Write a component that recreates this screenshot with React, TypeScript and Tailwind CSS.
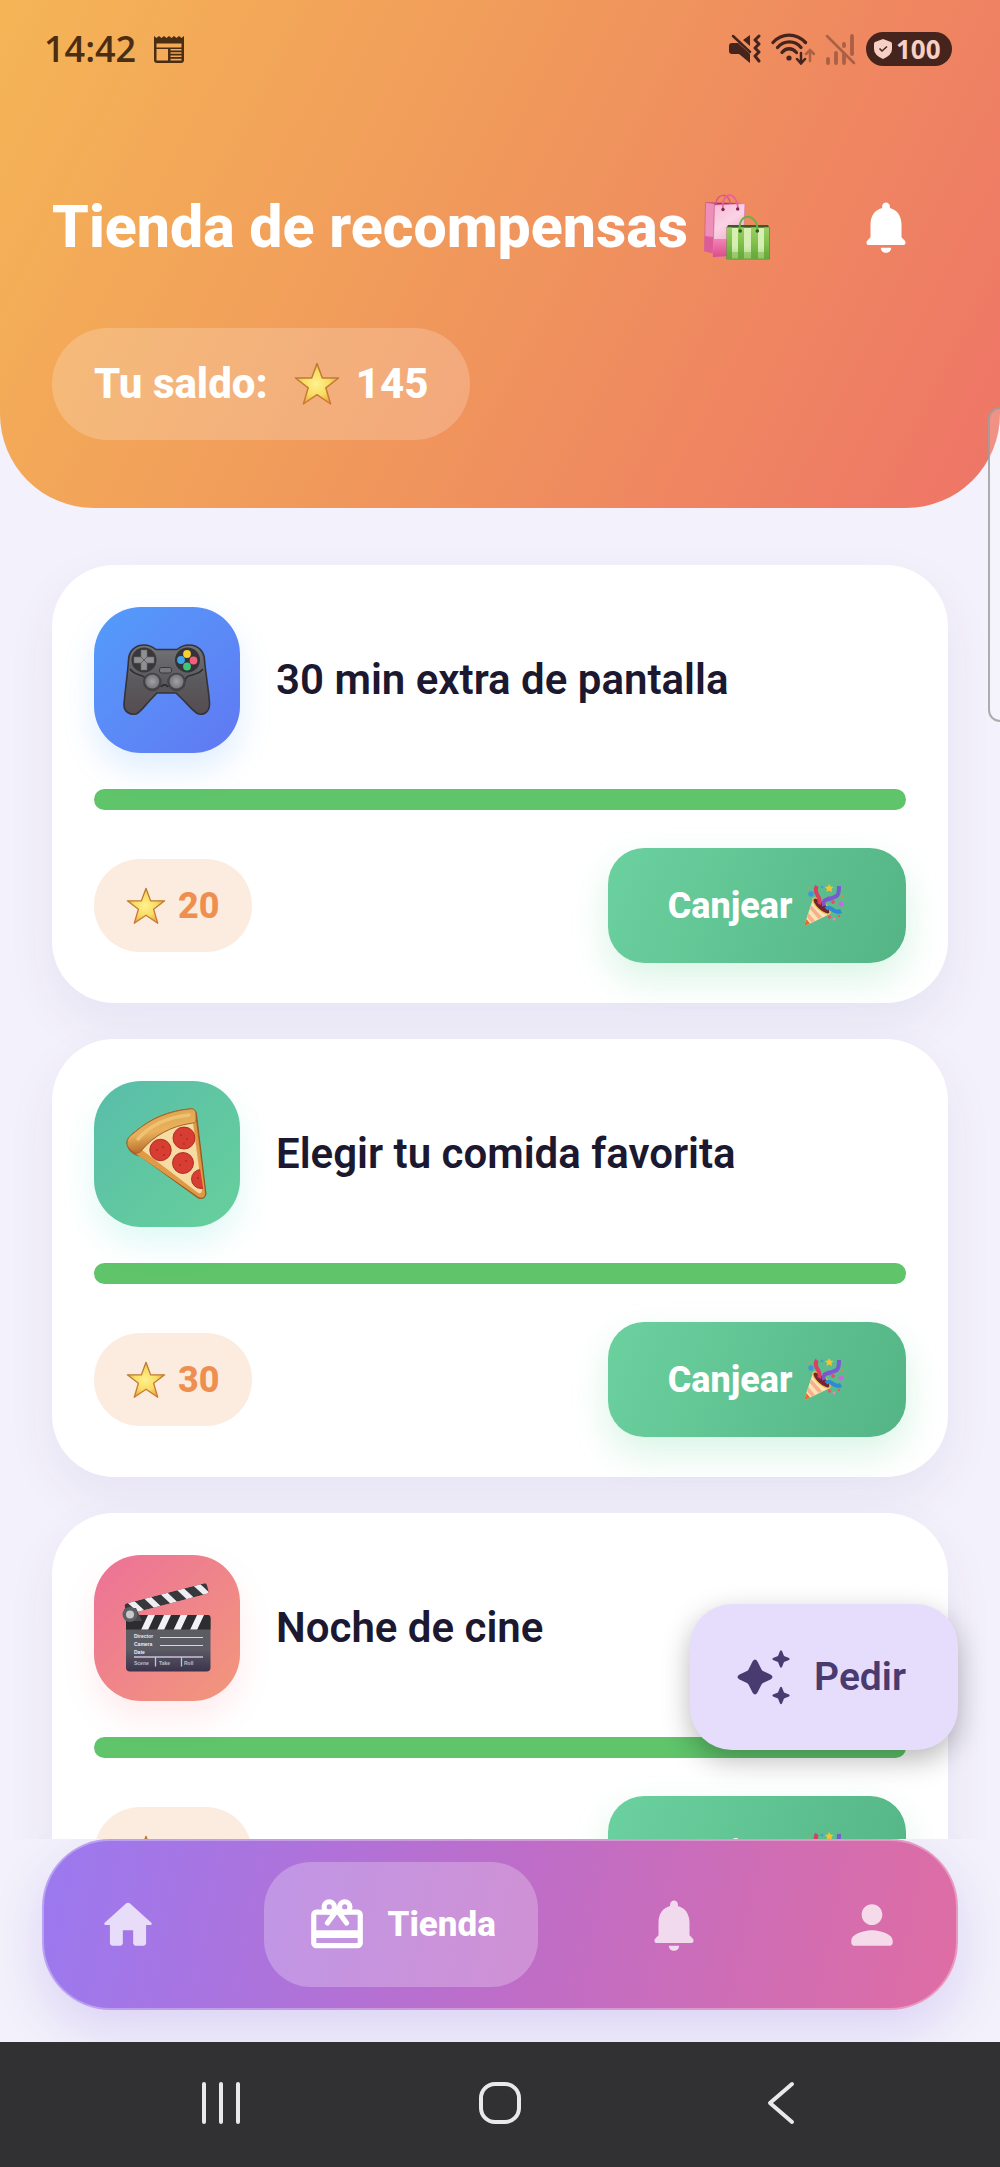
import type { ComponentType, ReactNode } from "react";

type IconProps = { className?: string };

/* ---------- Emoji drawings ---------- */

function StarEmoji({ className }: IconProps) {
  return (
    <svg viewBox="0 0 46 44" className={className} aria-hidden="true">
      <defs>
        <radialGradient id="star-fill" cx="0.48" cy="0.5" r="0.55">
          <stop offset="0" stopColor="#fff28f" />
          <stop offset="0.55" stopColor="#f9dc63" />
          <stop offset="1" stopColor="#e5a136" />
        </radialGradient>
        <linearGradient id="star-edge" x1="0" y1="0" x2="0" y2="1">
          <stop offset="0" stopColor="#b57e33" />
          <stop offset="1" stopColor="#cf7836" />
        </linearGradient>
      </defs>
      <path
        d="M23 1.5 28.3 16H44.6L31.8 25.8 36.6 42 23 32.7 9.4 42 14.2 25.8 1.4 16H17.7Z"
        fill="url(#star-fill)"
        stroke="url(#star-edge)"
        strokeWidth="1.5"
        strokeLinejoin="round"
      />
    </svg>
  );
}

function BagsEmoji({ className }: IconProps) {
  return (
    <svg viewBox="0 0 66 66" className={className} aria-hidden="true">
      <defs>
        <linearGradient id="bag-pink" x1="0" y1="0" x2="0.4" y2="1">
          <stop offset="0" stopColor="#f7b8d6" />
          <stop offset="0.45" stopColor="#fbd3e5" />
          <stop offset="1" stopColor="#f09cc4" />
        </linearGradient>
        <linearGradient id="bag-base" x1="0" y1="0" x2="0" y2="1">
          <stop offset="0" stopColor="#f184b4" />
          <stop offset="1" stopColor="#dc4c8b" />
        </linearGradient>
        <linearGradient id="bag-green" x1="0" y1="0" x2="0" y2="1">
          <stop offset="0" stopColor="#9ccf62" />
          <stop offset="0.5" stopColor="#7fc04a" />
          <stop offset="1" stopColor="#62a73b" />
        </linearGradient>
        <linearGradient id="bag-light" x1="0" y1="0" x2="0" y2="1">
          <stop offset="0" stopColor="#d9f0b4" />
          <stop offset="0.6" stopColor="#d5edb3" />
          <stop offset="1" stopColor="#a9d579" />
        </linearGradient>
      </defs>
      <path d="M2 8.5 40 9 10 12Z" fill="#a93266" />
      <path d="M1.5 8.5 10.5 9.5 9 59 0.5 57Z" fill="#ee8fba" stroke="#c95a8f" strokeWidth="0.7" />
      <path d="M0.8 42 9.5 43 9 59 0.5 57Z" fill="#dd5c97" />
      <path d="M10.5 11 41 9.5 39 61 9 63Z" fill="url(#bag-pink)" stroke="#d773a4" strokeWidth="0.7" />
      <path d="M9.4 45H39.4L39 61 9 63Z" fill="url(#bag-base)" />
      <path d="M12 10C12-1 26-2 26 10" fill="none" stroke="#d9558f" strokeWidth="1.5" />
      <path d="M19 15C17-3 33-4 34 15" fill="none" stroke="#e8619c" strokeWidth="1.7" />
      <circle cx="19" cy="15.5" r="1.7" fill="#7d2850" />
      <circle cx="33.7" cy="15" r="1.7" fill="#7d2850" />
      <path d="M24 31H64L65.5 34H22.5Z" fill="#375c26" />
      <path d="M23 33.5H65.5V65H22.7Z" fill="url(#bag-light)" stroke="#4f8c30" strokeWidth="0.8" />
      <path
        d="M34 33.5H40V65H34ZM47 33.5H54V65H47ZM60 33.5H65V65H60ZM23 33.5H28V65H23Z"
        fill="url(#bag-green)"
      />
      <path d="M36 37C33 18 54 18 53.5 37" fill="none" stroke="#69b345" strokeWidth="2" />
      <path d="M23 58H65.3V65H22.8Z" fill="#6fab3f" opacity="0.4" />
      <circle cx="36.2" cy="37" r="1.8" fill="#345a25" />
      <circle cx="53.3" cy="37" r="1.8" fill="#345a25" />
    </svg>
  );
}

function GamepadEmoji({ className }: IconProps) {
  return (
    <svg viewBox="0 0 88 72" className={className} aria-hidden="true">
      <defs>
        <linearGradient id="pad-body" x1="0" y1="0" x2="0" y2="1">
          <stop offset="0" stopColor="#747477" />
          <stop offset="0.5" stopColor="#5b5a5e" />
          <stop offset="1" stopColor="#554c50" />
        </linearGradient>
        <radialGradient id="pad-stick">
          <stop offset="0" stopColor="#a2a2a4" />
          <stop offset="1" stopColor="#77777a" />
        </radialGradient>
      </defs>
      <path
        d="M21 1C26 1 30 3 33 5.5H54C57 3 61 1 66 1C75 1 81 7 81.5 16C82 25 87 55 86.500 61C86 68 81 71 76 70C71 69 69 64 53 49H34C20 63 18 68 13 70C7 71 1 68 1 61C1 55 5 27 5.500 16C6 7 12 1 21 1Z"
        fill="url(#pad-body)"
        stroke="#343338"
        strokeWidth="1.6"
      />
      <path d="M7 25C14 34 22 28 23 38M80 25C73 34 62 28 62 38" fill="none" stroke="#2e2d31" strokeWidth="1.5" />
      <circle cx="29.3" cy="38" r="9.3" fill="#434246" />
      <circle cx="53.5" cy="38" r="9.3" fill="#434246" />
      <path d="M38 43C40 40 43 40 45 43" fill="none" stroke="#2f2e33" strokeWidth="2" />
      <circle cx="29.3" cy="37.5" r="7" fill="url(#pad-stick)" />
      <circle cx="53.5" cy="37.5" r="7" fill="url(#pad-stick)" />
      <circle cx="21" cy="16" r="12.5" fill="#38373b" />
      <circle cx="64.5" cy="16" r="12.5" fill="#343338" />
      <path d="M18 6H24V13H31V19H24V26H18V19H11V13H18Z" fill="#909092" stroke="#69696c" strokeWidth="0.6" />
      <path d="M18 13 24 19M24 13 18 19" stroke="#555" strokeWidth="0.8" />
      <circle cx="64" cy="10" r="3.9" fill="#f6cf33" />
      <circle cx="58" cy="16" r="3.9" fill="#3fa3e8" />
      <circle cx="70.5" cy="16.5" r="3.9" fill="#f0607a" />
      <circle cx="64" cy="22.5" r="3.9" fill="#3dc57a" />
      <rect x="36.5" y="23.5" width="12" height="5.5" rx="2" fill="#77777a" stroke="#39383c" />
    </svg>
  );
}

function PizzaEmoji({ className }: IconProps) {
  return (
    <svg viewBox="0 0 82 92" className={className} aria-hidden="true">
      <defs>
        <linearGradient id="crust" x1="0.3" y1="0" x2="0.6" y2="1">
          <stop offset="0" stopColor="#dca04c" />
          <stop offset="0.5" stopColor="#e9b15c" />
          <stop offset="1" stopColor="#a9571d" />
        </linearGradient>
        <clipPath id="slice">
          <path d="M16 42C27 28 48 17 67 15L78 86Q77 89 73 87Z" />
        </clipPath>
      </defs>
      <path
        d="M1 36C0 32 4 27 9 24C25 10 43 3 63 1C68 0 70 3 70.5 6L80 86Q79 92 72 90L14 48C7 47 2 42 1 36Z"
        fill="#bb6b25"
        stroke="#914818"
        strokeWidth="0.8"
      />
      <path d="M10 46 73 89Q79 91 79 85L70 13 66 14 74 79Q73 84 68 81L17 42Z" fill="#e09a45" />
      <path d="M16 42C27 28 48 17 67 15L76 83Q75 87 71 84Z" fill="#f6dba2" />
      <g clipPath="url(#slice)" fill="#d83d31" stroke="#a92822" strokeWidth="0.9">
        <circle cx="34.5" cy="42" r="10.7" />
        <circle cx="58" cy="30" r="11" />
        <circle cx="57" cy="55" r="10.5" />
        <circle cx="75" cy="71" r="9.5" />
      </g>
      <g fill="#ad2d27">
        <circle cx="31" cy="42" r="1" />
        <circle cx="37" cy="39" r="1" />
        <circle cx="38" cy="47" r="1" />
        <circle cx="55" cy="27" r="1" />
        <circle cx="61" cy="31" r="1" />
        <circle cx="58" cy="36" r="1" />
        <circle cx="54" cy="57" r="1" />
        <circle cx="60" cy="53" r="1" />
        <circle cx="72" cy="70" r="1" />
      </g>
      <path
        d="M1 35C1 30 5 27 9 24C25 10 44 3 63 1C68 0 70 3 70 7V12C70 15 67 15 64 15.5C46 18 27 28 16 42C14 45 11 46 8 44C4 42 1 39 1 35Z"
        fill="url(#crust)"
        stroke="#a8672a"
        strokeWidth="1"
      />
      <path d="M12 31C25 16 45 9 63 7" fill="none" stroke="#efc273" strokeWidth="3.5" strokeLinecap="round" />
    </svg>
  );
}

function ClapperEmoji({ className }: IconProps) {
  return (
    <svg viewBox="0 0 90 90" className={className} aria-hidden="true">
      <defs>
        <linearGradient id="board" x1="0" y1="0" x2="0" y2="1">
          <stop offset="0" stopColor="#5b5c5f" />
          <stop offset="0.6" stopColor="#5c5b65" />
          <stop offset="1" stopColor="#3c334c" />
        </linearGradient>
        <clipPath id="arm">
          <rect x="0" y="0" width="85" height="11" rx="3" />
        </clipPath>
        <clipPath id="strip">
          <path d="M4 32H86Q88.5 32 88.5 35V46.5H4Z" />
        </clipPath>
      </defs>
      <rect x="4" y="32" width="84.5" height="56.5" rx="4" fill="url(#board)" />
      <g clipPath="url(#strip)">
        <rect x="4" y="32" width="85" height="15" fill="#2d2d30" />
        <path
          d="M26 32H33L26 47H19ZM42 32H49L42 47H35ZM58.5 32H65.5L58.5 47H51.5ZM75 32H82L75 47H68Z"
          fill="#f1f1f6"
        />
      </g>
      <g transform="translate(2 21) rotate(-14.5)">
        <g clipPath="url(#arm)">
          <rect width="86" height="11" fill="#37383b" />
          <path
            d="M4 0H11L18 11H11ZM21 0H28L35 11H28ZM38 0H45L52 11H45ZM55 0H62L69 11H62ZM72 0H79L86 11H79Z"
            fill="#ededf2"
          />
        </g>
      </g>
      <path d="M2 26 14 25 20 38H4Z" fill="#4a4b4e" />
      <circle cx="8" cy="31.5" r="7.5" fill="#5e5f62" />
      <circle cx="8" cy="31.5" r="4" fill="#c8c9cb" />
      <g fill="#ebeaf0" fontFamily="Liberation Sans, sans-serif" fontSize="5" fontWeight="700">
        <text x="12" y="55">Director</text>
        <text x="12" y="63">Camera</text>
        <text x="12" y="70.5">Date</text>
        <text x="12" y="82" opacity="0.7">Scene</text>
        <text x="37" y="82" opacity="0.7">Take</text>
        <text x="62" y="82" opacity="0.7">Roll</text>
      </g>
      <path d="M38 54.5H81M38 62.5H81" stroke="#d8d7de" strokeWidth="1.2" />
      <path d="M12 74H81M33.5 74V83.5M59.5 74V83.5" stroke="#c8c0d8" strokeWidth="1.3" />
    </svg>
  );
}

function PartyEmoji({ className }: IconProps) {
  return (
    <svg viewBox="0 0 42 44" className={className} aria-hidden="true">
      <path d="M9 15C14 14 25 24 26 30L3 41Q0 42 1 39Z" fill="#fbe3b4" />
      <path d="M7 21 18 33 14.5 35 6 25ZM4.5 29 11 37 7.5 38.7 3.3 33.5Z" fill="#f7b08c" />
      <path d="M2.5 35 6 39.5 3 41Q0 42 1 39Z" fill="#e0702f" />
      <ellipse cx="17.5" cy="22" rx="11" ry="4.2" transform="rotate(42 17.5 22)" fill="#6f2632" stroke="#f4c24b" strokeWidth="1.3" />
      <path d="M15 20C19 14 8 9 13 2" fill="none" stroke="#dc3f62" strokeWidth="4" />
      <path d="M20 22C18 13 24 18 26 13" fill="none" stroke="#8154c9" strokeWidth="4" />
      <path d="M24 16C31 11 35 16 35 2" fill="none" stroke="#7a59d3" strokeWidth="4" />
      <path d="M22 25C27 20 29 31 37 27" fill="none" stroke="#2f89d8" strokeWidth="4.2" />
      <path d="M25 0 26.5 2.5 29.5 3 27.5 5 28 8 25 6.5 22.5 8 23 5 21 3 24 2.5Z" fill="#f6c22f" />
      <circle cx="7" cy="10" r="2.7" fill="#4193dd" />
      <circle cx="18" cy="3" r="1.3" fill="#3f9bd9" />
      <circle cx="5" cy="4" r="1" fill="#c99a4d" />
      <circle cx="29" cy="18" r="1.9" fill="#e64d6d" />
      <circle cx="37" cy="20" r="2.6" fill="#c76cd7" />
      <circle cx="38" cy="12" r="1.3" fill="#df8c41" />
      <circle cx="25.5" cy="33" r="1.7" fill="#e9566e" />
      <circle cx="30" cy="35" r="1.5" fill="#e88ab4" />
      <circle cx="35" cy="32" r="1.2" fill="#e9566e" />
    </svg>
  );
}

/* ---------- UI icons ---------- */

function Glyph({ d, className }: { d: string; className?: string }) {
  return (
    <svg viewBox="0 0 24 24" fill="currentColor" className={className} aria-hidden="true">
      <path d={d} />
    </svg>
  );
}

const glyphs = {
  home: "M10 19v-5h4v5c0 .55.45 1 1 1h3c.55 0 1-.45 1-1v-7h1.7c.46 0 .68-.57.33-.87L12.67 3.6c-.38-.34-.96-.34-1.34 0l-8.36 7.53c-.34.3-.13.87.33.87H5v7c0 .55.45 1 1 1h3c.55 0 1-.45 1-1z",
  bell: "M12 22c1.1 0 2-.9 2-2h-4c0 1.1.89 2 2 2zm6-6v-5c0-3.07-1.64-5.64-4.5-6.32V4c0-.83-.67-1.5-1.5-1.5s-1.5.67-1.5 1.5v.68C7.63 5.36 6 7.92 6 11v5l-1.29 1.29c-.63.63-.19 1.71.7 1.71h13.17c.89 0 1.34-1.08.71-1.71L18 16z",
  person:
    "M12 12c2.21 0 4-1.79 4-4s-1.79-4-4-4-4 1.79-4 4 1.79 4 4 4zm0 2c-2.67 0-8 1.34-8 4v1c0 .55.45 1 1 1h14c.55 0 1-.45 1-1v-1c0-2.66-5.33-4-8-4z",
};

function GiftIcon({ className }: IconProps) {
  return (
    <svg viewBox="0 0 24 24" fill="none" stroke="currentColor" strokeWidth="2" className={className} aria-hidden="true">
      <rect x="3" y="7" width="18" height="13" rx="1" />
      <path d="M3 15.5H21" strokeWidth="3" />
      <circle cx="9" cy="5" r="2" />
      <circle cx="15" cy="5" r="2" />
      <path d="M8.3 11.2 12 6.2 15.7 11.2" strokeLinecap="round" />
    </svg>
  );
}

function SparklesIcon({ className }: IconProps) {
  return (
    <svg viewBox="0 0 62 62" fill="currentColor" className={className} aria-hidden="true">
      <path d="M20.5 15.500Q23 11.500 25.500 15.500L29.500 23.500Q30 24.500 31 25L38.500 28.600Q42.500 31 38.500 33.400L31 37Q30 37.500 29.500 38.500L25.500 46.500Q23 50.500 20.500 46.500L16.500 38.500Q16 37.500 15 37L7.500 33.400Q3.500 31 7.500 28.600L15 25Q16 24.500 16.500 23.500Z" />
      <path d="M48 5Q49 3.500 50 5L52 10 57 12Q58.500 13 57 14L52 16 50 21Q49 22.500 48 21L46 16 41 14Q39.500 13 41 12L46 10Z" />
      <path d="M48 41.500Q49 40 50 41.500L52 46.500 57 48.500Q58.500 49.500 57 50.500L52 52.500 50 57.500Q49 59 48 57.500L46 52.500 41 50.500Q39.500 49.500 41 48.500L46 46.500Z" />
    </svg>
  );
}

function NewsIcon({ className }: IconProps) {
  return (
    <svg viewBox="0 0 30 27" className={className} aria-hidden="true">
      <path
        d="M0 0 2.5 2 5 0 7.5 2 10 0 12.5 2 15 0 17.5 2 20 0 22.5 2 25 0 27.5 2 30 0V24Q30 27 27 27H3Q0 27 0 24ZM2.5 7.5V11.500H27.500V7.500ZM2.500 13V24.500H14V13ZM16.500 13V14.500H27.500V13ZM16.500 16.300V17.800H27.500V16.300ZM16.500 19.600V21H27.500V19.600ZM16.500 22.800V24.500H27.500V22.800Z"
        fill="currentColor"
        fillRule="evenodd"
      />
    </svg>
  );
}

function MuteIcon({ className }: IconProps) {
  return (
    <svg viewBox="0 0 32 30" className={className} aria-hidden="true">
      <path d="M0 12Q0 9 3 9H9L21 20V29L10 20H3Q0 20 0 17ZM14 6 21 1V12Z" fill="currentColor" />
      <path d="M4 2 21 18" stroke="currentColor" strokeWidth="2.5" strokeLinecap="round" />
      <path
        d="M30 2 26 6 30 10 26 14 30 18 26 22 30 27"
        fill="none"
        stroke="currentColor"
        strokeWidth="3"
        strokeLinecap="round"
        strokeLinejoin="round"
      />
    </svg>
  );
}

function WifiIcon({ className }: IconProps) {
  return (
    <svg viewBox="0 0 44 32" fill="none" stroke="currentColor" className={className} aria-hidden="true">
      <g strokeWidth="3.3" strokeLinecap="round">
        <path d="M2 9.5C11-.3 25-.3 34.5 9.5" />
        <path d="M6.5 14.5C13 7 24 7 30 14.5" />
        <path d="M11 19.5C15 14.5 21 14.5 25.5 19.5" />
      </g>
      <circle cx="18" cy="25" r="2.6" fill="currentColor" stroke="none" />
      <path d="M30 20V30M26 26 30 30.5 34 26" strokeWidth="2.5" strokeLinecap="round" />
      <path d="M39 28V18M35 21 39 17 43 21" strokeWidth="2.5" strokeLinecap="round" opacity="0.4" />
    </svg>
  );
}

function NoSignalIcon({ className }: IconProps) {
  return (
    <svg viewBox="0 0 31 31" stroke="currentColor" strokeLinecap="round" className={className} aria-hidden="true">
      <path d="M3 25V29M11 19V29M19 20V29M19 10V12M27 2V20" strokeWidth="3.8" />
      <path d="M2 2 29 29" strokeWidth="2.5" />
    </svg>
  );
}

function ShieldIcon({ className }: IconProps) {
  return (
    <svg viewBox="0 0 18 20" className={className} aria-hidden="true">
      <path d="M9 0 17 3Q18 3.5 18 5V10Q18 16 9 20Q0 16 0 10V5Q0 3.5 1 3Z" fill="#f7cfc4" />
      <path d="M5.5 9.5 8 12 13 7.5" fill="none" stroke="#44241c" strokeWidth="1.5" />
    </svg>
  );
}

/* ---------- Screen parts ---------- */

function StatusBar() {
  return (
    <div className="flex h-[34px] items-center justify-between pl-11 pr-12">
      <div className="flex items-center gap-[18px] text-[#4a2d12]">
        <span className="font-['Open_Sans',sans-serif] text-[36px] font-semibold leading-[34px]">14:42</span>
        <NewsIcon className="h-[27px] w-[30px]" />
      </div>
      <div className="flex items-center gap-2.5 text-[#44241c]">
        <MuteIcon className="h-[30px] w-8" />
        <WifiIcon className="h-8 w-11" />
        <NoSignalIcon className="size-[31px] opacity-40" />
        <span className="flex h-[34px] w-[86px] items-center gap-1 rounded-full bg-[#44241c] pl-2 font-['Open_Sans',sans-serif] text-[26px] font-bold leading-[34px] text-[#f7cfc4]">
          <ShieldIcon className="h-5 w-[18px]" />
          100
        </span>
      </div>
    </div>
  );
}

function Header() {
  return (
    <header className="rounded-b-[94px] bg-[linear-gradient(117deg,#f5b556_0%,#f0965c_50%,#ee7467_100%)] pb-[68px] pt-8 text-white">
      <StatusBar />
      <div className="mt-[98px] flex h-[125px] items-center justify-between px-[52px]">
        <h1 className="flex items-center gap-4 text-[59px] font-extrabold leading-[66px]">
          Tienda de recompensas
          <BagsEmoji className="size-[66px]" />
        </h1>
        <button type="button" aria-label="Notificaciones" className="flex size-[125px] items-center justify-center">
          <Glyph d={glyphs.bell} className="size-[62px]" />
        </button>
      </div>
      <div className="mt-[39px] px-[52px]">
        <p className="inline-flex h-28 items-center rounded-full bg-white/20 px-[42px] text-[42px] font-extrabold leading-[52px]">
          Tu saldo:
          <StarEmoji className="ml-[26px] mr-4 h-11 w-[46px]" />
          145
        </p>
      </div>
    </header>
  );
}

type Reward = {
  title: string;
  cost: number;
  Emoji: ComponentType<IconProps>;
  emojiSize: string;
  tile: string;
};

const rewards: Reward[] = [
  {
    title: "30 min extra de pantalla",
    cost: 20,
    Emoji: GamepadEmoji,
    emojiSize: "h-[72px] w-[88px]",
    tile: "bg-linear-135 from-[#539cfb] to-[#6078f2] shadow-[0_16px_32px_rgba(80,160,255,0.18)]",
  },
  {
    title: "Elegir tu comida favorita",
    cost: 30,
    Emoji: PizzaEmoji,
    emojiSize: "h-[92px] w-[82px]",
    tile: "bg-linear-135 from-[#59bda9] to-[#67d09b] shadow-[0_16px_32px_rgba(80,220,200,0.18)]",
  },
  {
    title: "Noche de cine",
    cost: 40,
    Emoji: ClapperEmoji,
    emojiSize: "size-[90px]",
    tile: "bg-linear-135 from-[#ec7197] to-[#f2977a] shadow-[0_16px_32px_rgba(255,110,130,0.14)]",
  },
];

function RewardCard({ title, cost, Emoji, emojiSize, tile }: Reward) {
  return (
    <li className="rounded-[62px] bg-white px-[42px] pb-10 pt-[42px] shadow-[0_20px_50px_rgba(80,60,150,0.07)]">
      <div className="flex items-center gap-9">
        <div className={`flex size-[146px] shrink-0 items-center justify-center rounded-[47px] ${tile}`}>
          <Emoji className={emojiSize} />
        </div>
        <h2 className="text-[42px] font-semibold leading-[52px] text-[#1b1830]">{title}</h2>
      </div>
      <div
        role="progressbar"
        aria-label={title}
        aria-valuenow={100}
        className="mt-9 h-[21px] rounded-full bg-[#5fc46a]"
      />
      <div className="mt-[38px] flex items-center justify-between">
        <span className="flex h-[93px] items-center gap-3 rounded-[46px] bg-[#fbecdf] px-8 text-[36px] font-extrabold leading-[44px] text-[#ee8f50]">
          <StarEmoji className="h-[38px] w-10" />
          {cost}
        </span>
        <button
          type="button"
          className="flex h-[115px] w-[298px] items-center justify-center gap-3 rounded-[36px] bg-[linear-gradient(111deg,#6bd19f,#54b485)] text-[36px] font-extrabold leading-[44px] text-white shadow-[0_16px_36px_rgba(80,210,140,0.22)]"
        >
          Canjear
          <PartyEmoji className="h-11 w-[42px]" />
        </button>
      </div>
    </li>
  );
}

function NavItem({ label, children }: { label: string; children: ReactNode }) {
  return (
    <a href="#" aria-label={label} className="flex size-[125px] items-center justify-center text-white/75">
      {children}
    </a>
  );
}

function BottomNav() {
  return (
    <div className="px-[42px] pb-8">
      <nav className="flex items-center justify-between rounded-[68px] border-2 border-white/30 bg-[linear-gradient(101deg,#9b79f0_0%,#be6dc8_52%,#df6da3_100%)] bg-origin-border p-[21px] shadow-[0_20px_50px_rgba(110,80,220,0.18)]">
        <NavItem label="Inicio">
          <Glyph d={glyphs.home} className="size-[62px]" />
        </NavItem>
        <a
          href="#"
          aria-current="page"
          className="flex h-[125px] items-center gap-5 rounded-[47px] bg-white/25 px-[42px] text-[35px] font-extrabold leading-[42px] text-white"
        >
          <GiftIcon className="size-[62px]" />
          Tienda
        </a>
        <NavItem label="Avisos">
          <Glyph d={glyphs.bell} className="size-[62px]" />
        </NavItem>
        <NavItem label="Perfil">
          <Glyph d={glyphs.person} className="size-[62px]" />
        </NavItem>
      </nav>
    </div>
  );
}

function SystemBar() {
  return (
    <div className="flex h-[125px] shrink-0 items-center justify-around bg-[#313133] px-[81px] pb-1 text-[#e9e9ea]">
      <button type="button" aria-label="Recientes">
        <svg viewBox="0 0 44 44" className="size-11" stroke="currentColor" strokeWidth="4" strokeLinecap="round">
          <path d="M5 3V41M22 3V41M39 3V41" />
        </svg>
      </button>
      <button type="button" aria-label="Pantalla de inicio">
        <svg viewBox="0 0 44 44" className="size-11" fill="none" stroke="currentColor" strokeWidth="4">
          <rect x="3" y="3" width="38" height="38" rx="14" />
        </svg>
      </button>
      <button type="button" aria-label="Atrás">
        <svg
          viewBox="0 0 44 44"
          className="size-11"
          fill="none"
          stroke="currentColor"
          strokeWidth="4"
          strokeLinecap="round"
          strokeLinejoin="round"
        >
          <path d="M35 3 13 22 35 41" />
        </svg>
      </button>
    </div>
  );
}

export default function App() {
  return (
    <div className="relative flex h-screen flex-col overflow-hidden bg-[#f3f1fb] font-[Roboto,sans-serif]">
      <Header />
      <main className="relative min-h-0 flex-1 overflow-hidden">
        <ul className="flex flex-col gap-9 px-[52px] pt-[57px]">
          {rewards.map((reward) => (
            <RewardCard key={reward.title} {...reward} />
          ))}
        </ul>
        <button
          type="button"
          className="absolute bottom-[89px] right-[42px] flex h-[146px] items-center gap-5 rounded-[42px] bg-[#e6ddfd] pl-[42px] pr-[52px] text-[39px] font-semibold leading-[52px] text-[#493b70] shadow-[0_10px_28px_rgba(0,0,0,0.28)]"
        >
          <SparklesIcon className="size-[62px]" />
          Pedir
        </button>
      </main>
      <BottomNav />
      <SystemBar />
      {/* Edge panel handle */}
      <div className="absolute right-0 top-[407px] h-[315px] w-3 rounded-l-xl border-2 border-r-0 border-[#9a9a9a]/80 bg-white/20" />
    </div>
  );
}
